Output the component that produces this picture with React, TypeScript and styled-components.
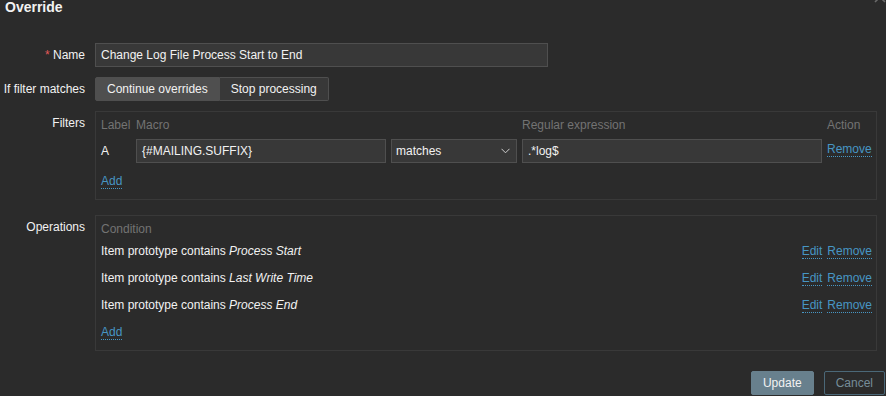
import React from "react";
import styled, { createGlobalStyle } from "styled-components";

const Global = createGlobalStyle`
  html, body { margin: 0; padding: 0; background: #2b2b2b; }
  body {
    font-family: "Liberation Sans", Arial, sans-serif;
    font-size: 12px;
    color: #f2f2f2;
  }
  * { box-sizing: border-box; }
`;

const Page = styled.div`
  position: relative;
  width: 886px;
  height: 396px;
  overflow: hidden;
  background: #2b2b2b;
`;

const Title = styled.h4`
  margin: 0;
  padding-left: 5px;
  font-size: 14px;
  line-height: 14px;
  font-weight: bold;
  color: #f2f2f2;
`;

const CloseButton = styled.svg`
  position: absolute;
  top: -9px;
  right: 0;
`;

const Form = styled.div`
  display: grid;
  grid-template-columns: 85px 782px;
  column-gap: 10px;
  row-gap: 10px;
  margin-top: 29px;
`;

const Label = styled.div<{ $box?: boolean }>`
  text-align: right;
  white-space: nowrap;
  line-height: ${(p) => (p.$box ? "14px" : "24px")};
  padding-top: ${(p) => (p.$box ? "5px" : "0")};
`;

const Asterisk = styled.span`
  color: #e45959;
`;

const TextInput = styled.div<{ $width: number }>`
  width: ${(p) => p.$width}px;
  height: 24px;
  line-height: 22px;
  padding: 0 5px;
  background: #383838;
  border: 1px solid #4f4f4f;
  color: #f2f2f2;
  white-space: nowrap;
  overflow: hidden;
`;

const RadioGroup = styled.div`
  display: flex;
  align-self: start;
  justify-self: start;
`;

const RadioLabel = styled.div<{ $checked?: boolean; $first?: boolean }>`
  height: 24px;
  line-height: 22px;
  padding: 0 11px;
  border: 1px solid #4f4f4f;
  ${(p) => (p.$first ? "" : "border-left: none;")}
  background: ${(p) => (p.$checked ? "#4f4f4f" : "#383838")};
  border-radius: ${(p) => (p.$first ? "2px 0 0 2px" : "0 2px 2px 0")};
  color: #f2f2f2;
  white-space: nowrap;
`;

const Box = styled.div<{ $after?: number }>`
  width: 782px;
  border: 1px solid #393939;
  padding: 6px 4px 11px 5px;
  margin-bottom: ${(p) => p.$after ?? 0}px;
`;

const FilterGrid = styled.div`
  display: grid;
  grid-template-columns: 30px 250px 126px 300px 1fr;
  column-gap: 5px;
  row-gap: 7px;
`;

const HeadCell = styled.div`
  color: #737373;
  line-height: 14px;
  height: 14px;
  white-space: nowrap;
`;

const Cell = styled.div`
  line-height: 24px;
  height: 24px;
  white-space: nowrap;
`;

const SelectBox = styled.div`
  display: flex;
  align-items: center;
  justify-content: space-between;
  height: 24px;
  padding: 0 6px 0 4px;
  background: #383838;
  border: 1px solid #4f4f4f;
  color: #f2f2f2;
`;

const Link = styled.a<{ $top?: number }>`
  display: inline-block;
  align-self: start;
  justify-self: start;
  margin-top: ${(p) => p.$top ?? 0}px;
  margin-bottom: -1px;
  color: #4796c4;
  line-height: 14px;
  height: 15px;
  text-decoration: none;
  border-bottom: 1px dotted #4796c4;
  cursor: pointer;
  white-space: nowrap;
`;

const AddRow = styled.div<{ $top: number }>`
  padding-top: ${(p) => p.$top}px;
  height: ${(p) => p.$top + 14}px;
`;

const OpRow = styled.div`
  display: flex;
  justify-content: space-between;
  padding: 8px 0 5px;
  line-height: 14px;
  height: 27px;
`;

const OpText = styled.span`
  white-space: nowrap;
`;

const Actions = styled.span`
  display: flex;
  gap: 5px;
  height: 14px;
`;

const Footer = styled.div`
  display: flex;
  justify-content: flex-end;
  gap: 10px;
  margin-top: 20px;
  padding-right: 1px;
`;

const Button = styled.button<{ $alt?: boolean }>`
  height: 24px;
  padding: 0 11px;
  font-family: "Liberation Sans", Arial, sans-serif;
  font-size: 12px;
  line-height: 22px;
  border-radius: 2px;
  border: 1px solid ${(p) => (p.$alt ? "#4b6878" : "#68808d")};
  background: ${(p) => (p.$alt ? "transparent" : "#68808d")};
  color: ${(p) => (p.$alt ? "#768d99" : "#f2f2f2")};
  cursor: pointer;
`;

const operations = ["Process Start", "Last Write Time", "Process End"];

export default function App() {
  return (
    <Page>
      <Global />
      <CloseButton width="12" height="12" viewBox="0 0 12 12">
        <path d="M1 1 L11 11 M11 1 L1 11" stroke="#6a6a6a" strokeWidth="1.6" fill="none" />
      </CloseButton>
      <Title>Override</Title>
      <Form>
        <Label>
          <Asterisk>*</Asterisk> Name
        </Label>
        <TextInput $width={453}>Change Log File Process Start to End</TextInput>

        <Label>If filter matches</Label>
        <RadioGroup>
          <RadioLabel $first $checked>
            Continue overrides
          </RadioLabel>
          <RadioLabel>Stop processing</RadioLabel>
        </RadioGroup>

        <Label $box>Filters</Label>
        <Box $after={5}>
          <FilterGrid>
            <HeadCell>Label</HeadCell>
            <HeadCell>Macro</HeadCell>
            <HeadCell />
            <HeadCell>Regular expression</HeadCell>
            <HeadCell>Action</HeadCell>

            <Cell>A</Cell>
            <TextInput $width={250}>{"{#MAILING.SUFFIX}"}</TextInput>
            <SelectBox>
              <span>matches</span>
              <svg width="9" height="6" viewBox="0 0 9 6">
                <path d="M0.5 0.8 L4.5 4.8 L8.5 0.8" stroke="#cfcfcf" strokeWidth="1" fill="none" />
              </svg>
            </SelectBox>
            <TextInput $width={300}>.*log$</TextInput>
            <Link $top={3}>Remove</Link>
          </FilterGrid>
          <AddRow $top={11}>
            <Link>Add</Link>
          </AddRow>
        </Box>

        <Label $box>Operations</Label>
        <Box>
          <HeadCell>Condition</HeadCell>
          {operations.map((op) => (
            <OpRow key={op}>
              <OpText>
                Item prototype contains <i>{op}</i>
              </OpText>
              <Actions>
                <Link>Edit</Link>
                <Link>Remove</Link>
              </Actions>
            </OpRow>
          ))}
          <AddRow $top={8}>
            <Link>Add</Link>
          </AddRow>
        </Box>
      </Form>
      <Footer>
        <Button>Update</Button>
        <Button $alt>Cancel</Button>
      </Footer>
    </Page>
  );
}
